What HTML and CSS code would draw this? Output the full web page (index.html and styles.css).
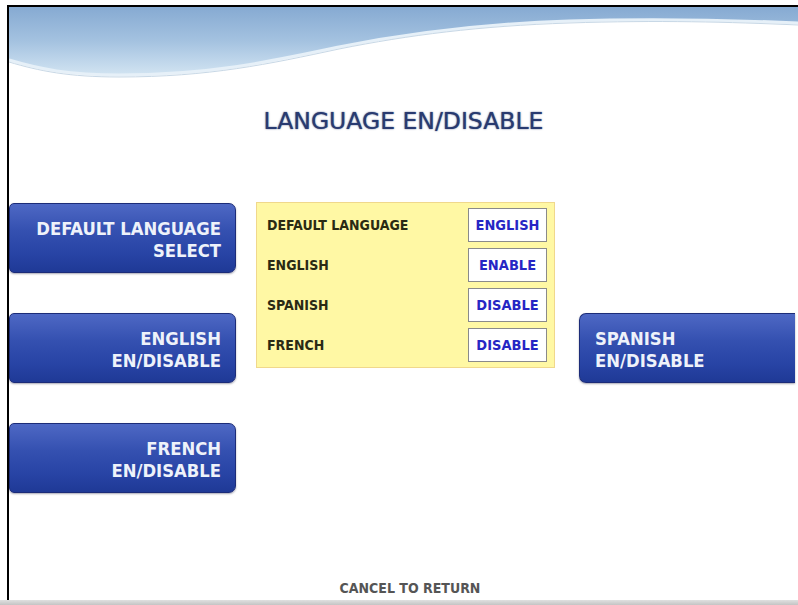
FILE: index.html
```html
<!DOCTYPE html>
<html lang="en">
<head>
    <meta charset="UTF-8">
    <meta name="viewport" content="width=device-width, initial-scale=1.0">
    <title>Language En/Disable</title>
    <link rel="stylesheet" href="styles.css">
</head>
<body>

    <div class="screen">
        <svg class="wave" viewBox="0 0 789 80" preserveAspectRatio="none" width="789" height="80">
            <defs>
                <linearGradient id="sky" x1="0" y1="0" x2="0" y2="1">
                    <stop offset="0" stop-color="#86aad2"/>
                    <stop offset="0.5" stop-color="#a4c2e0"/>
                    <stop offset="1" stop-color="#d2e4f2"/>
                </linearGradient>
            </defs>
            <path d="M0 0 H789 V16 C720 13 650 11 560 14 C470 17 400 26 330 40 C260 55 200 68 110 68 C60 68 30 62 0 53 Z" fill="url(#sky)"/>
            <path d="M0 53 C30 62 60 68 110 68 C200 68 260 55 330 40 C400 26 470 17 560 14 C650 11 720 13 789 16" fill="none" stroke="#e6f0f8" stroke-width="3"/>
            <path d="M0 55 C30 64 60 70 110 70 C200 70 260 57 330 42 C400 28 470 19 560 16 C650 13 720 15 789 18" fill="none" stroke="#c8d8e6" stroke-width="1"/>
        </svg>

        <h1 class="title">LANGUAGE EN/DISABLE</h1>

        <div class="keys">
            <button class="key key-left">DEFAULT LANGUAGE<br>SELECT</button>

            <div class="status">
                <div class="status-row"><span class="label">DEFAULT LANGUAGE</span><span class="value">ENGLISH</span></div>
                <div class="status-row"><span class="label">ENGLISH</span><span class="value">ENABLE</span></div>
                <div class="status-row"><span class="label">SPANISH</span><span class="value">DISABLE</span></div>
                <div class="status-row"><span class="label">FRENCH</span><span class="value">DISABLE</span></div>
            </div>

            <button class="key key-left">ENGLISH<br>EN/DISABLE</button>
            <button class="key key-right">SPANISH<br>EN/DISABLE</button>
            <button class="key key-left">FRENCH<br>EN/DISABLE</button>
        </div>

        <p class="cancel">CANCEL TO RETURN</p>
    </div>
    <div class="bottom-bar"></div>

</body>
</html>
```

FILE: styles.css
```css
* {
    margin: 0;
    padding: 0;
    box-sizing: border-box;
    font-family: 'DejaVu Sans Condensed', 'DejaVu Sans', sans-serif;
}

body {
    background: #fff;
    width: 798px;
    height: 605px;
    padding: 5px 0 0 7px;
    overflow: hidden;
}

.screen {
    height: 595px;
    border-top: 2px solid #000;
    border-left: 2px solid #000;
    display: flex;
    flex-direction: column;
}

.wave {
    display: block;
    width: 789px;
    height: 80px;
}

.title {
    font-family: 'DejaVu Sans', sans-serif;
    font-size: 23.5px;
    font-weight: normal;
    color: #283a70;
    text-shadow: 0 0 2px rgba(40, 58, 112, 0.5), 0 0 1px rgba(40, 58, 112, 0.6);
    text-align: center;
    margin: 20px 0 0 0;
    line-height: 28px;
}

.keys {
    display: grid;
    grid-template-columns: 227px 299px 219px;
    grid-template-rows: 70px 70px 70px;
    column-gap: 20px;
    row-gap: 40px;
    margin-top: 68px;
}

.key {
    border: 1px solid #1c2c78;
    background: linear-gradient(#4e68c4, #3450b0 40%, #2743a4 75%, #1f3996);
    color: #eef2fa;
    font-size: 18.3px;
    font-weight: bold;
    line-height: 22px;
    box-shadow: 0 1px 2px rgba(0, 0, 40, 0.35);
}

.key-left {
    grid-column: 1;
    border-radius: 5px 7px 7px 5px;
    text-align: right;
    padding: 4px 14px 0 0;
}

.key-right {
    grid-column: 3;
    grid-row: 2;
    border-right: none;
    border-radius: 7px 0 0 7px;
    text-align: left;
    padding: 4px 0 0 15px;
    margin: 0 -1px 0 4px;
}

.status {
    grid-column: 2;
    grid-row: 1 / span 2;
    align-self: start;
    height: 166px;
    margin-top: -1px;
    background: #fff8a4;
    border: 1px solid #f0d88c;
    padding: 5px 7px 0 10px;
    display: flex;
    flex-direction: column;
    gap: 6px;
}

.status-row {
    display: flex;
    justify-content: space-between;
    align-items: center;
    height: 34px;
}

.label {
    font-size: 14px;
    font-weight: bold;
    color: #2a2a14;
}

.value {
    width: 79px;
    height: 34px;
    border: 1px solid #8a8a8a;
    background: #fff;
    color: #2626c4;
    font-size: 14.5px;
    font-weight: bold;
    display: flex;
    align-items: center;
    justify-content: center;
}

.cancel {
    margin-top: auto;
    margin-bottom: 4px;
    text-align: center;
    padding-left: 13px;
    font-size: 14px;
    font-weight: bold;
    color: #555;
}

.bottom-bar {
    height: 5px;
    margin-left: -7px;
    background: linear-gradient(#e0e0e0, #c4c4c4);
}
```
